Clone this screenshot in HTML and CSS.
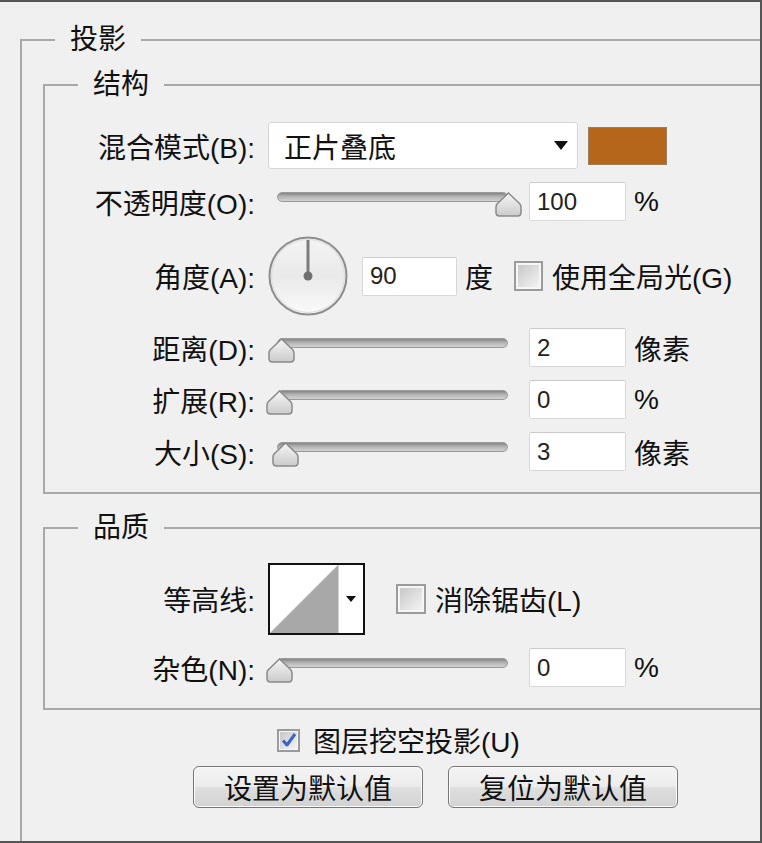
FILE: index.html
```html
<!DOCTYPE html>
<html lang="zh-CN">
<head>
  <meta charset="UTF-8">
  <title>投影</title>
  <link rel="stylesheet" href="styles.css">
</head>
<body>
  <div class="dialog">
    <fieldset class="group shadow">
      <legend>投影</legend>

      <!-- 结构 -->
      <fieldset class="group sub structure">
        <legend>结构</legend>
        <div class="rows">
          <div class="row row-blend">
            <span class="label">混合模式(B):</span>
            <div class="select">
              <span class="select-text">正片叠底</span>
              <span class="caret"></span>
            </div>
            <span class="swatch"></span>
          </div>

          <div class="row">
            <span class="label">不透明度(O):</span>
            <div class="slider">
              <span class="track"></span>
              <svg class="thumb" style="left: 227px" width="27" height="25" viewBox="0 0 27 25"><use href="#thumb"/></svg>
            </div>
            <span class="field">100</span>
            <span class="unit">%</span>
          </div>

          <div class="row row-angle">
            <span class="label">角度(A):</span>
            <svg class="dial" width="80" height="80" viewBox="0 0 80 80">
              <defs>
                <linearGradient id="dialFill" x1="0" y1="0" x2="0" y2="1">
                  <stop offset="0" stop-color="#f4f4f4"/>
                  <stop offset="0.5" stop-color="#e9e9e9"/>
                  <stop offset="1" stop-color="#fafafa"/>
                </linearGradient>
              </defs>
              <circle cx="40" cy="40" r="38.5" fill="url(#dialFill)" stroke="#8d8d8d" stroke-width="2"/>
              <circle cx="40" cy="40" r="36.5" fill="none" stroke="#dcdcdc" stroke-width="1"/>
              <line x1="40" y1="4" x2="40" y2="39" stroke="#7c7c7c" stroke-width="3"/>
              <circle cx="40" cy="40" r="4.5" fill="#6f6f6f"/>
            </svg>
            <span class="field field-angle">90</span>
            <span class="unit">度</span>
            <span class="check check-gap"></span>
            <span class="check-text">使用全局光(G)</span>
          </div>

          <div class="row">
            <span class="label">距离(D):</span>
            <div class="slider">
              <span class="track"></span>
              <svg class="thumb" style="left: 0px" width="27" height="25" viewBox="0 0 27 25"><use href="#thumb"/></svg>
            </div>
            <span class="field">2</span>
            <span class="unit">像素</span>
          </div>

          <div class="row">
            <span class="label">扩展(R):</span>
            <div class="slider">
              <span class="track"></span>
              <svg class="thumb" style="left: -2px" width="27" height="25" viewBox="0 0 27 25"><use href="#thumb"/></svg>
            </div>
            <span class="field">0</span>
            <span class="unit">%</span>
          </div>

          <div class="row">
            <span class="label">大小(S):</span>
            <div class="slider">
              <span class="track"></span>
              <svg class="thumb" style="left: 4px" width="27" height="25" viewBox="0 0 27 25"><use href="#thumb"/></svg>
            </div>
            <span class="field">3</span>
            <span class="unit">像素</span>
          </div>
        </div>
      </fieldset>

      <!-- 品质 -->
      <fieldset class="group sub quality">
        <legend>品质</legend>
        <div class="rows">
          <div class="row row-contour">
            <span class="label">等高线:</span>
            <div class="contour">
              <svg class="contour-preview" width="68" height="68" viewBox="0 0 68 68">
                <polygon points="0,68 68,0 68,68" fill="#a8a8a8"/>
              </svg>
              <span class="contour-arrow"><span class="caret caret-small"></span></span>
            </div>
            <span class="check check-aa"></span>
            <span class="check-text">消除锯齿(L)</span>
          </div>

          <div class="row">
            <span class="label">杂色(N):</span>
            <div class="slider">
              <span class="track"></span>
              <svg class="thumb" style="left: -2px" width="27" height="25" viewBox="0 0 27 25"><use href="#thumb"/></svg>
            </div>
            <span class="field">0</span>
            <span class="unit">%</span>
          </div>
        </div>
      </fieldset>

      <div class="knockout">
        <span class="check check-small checked">
          <svg width="18" height="18" viewBox="0 0 18 18"><path d="M3 9.5 L7 14 L15 3" fill="none" stroke="#3b63c4" stroke-width="3" stroke-linejoin="round"/></svg>
        </span>
        <span class="check-text">图层挖空投影(U)</span>
      </div>

      <div class="buttons">
        <button type="button" class="btn">设置为默认值</button>
        <button type="button" class="btn">复位为默认值</button>
      </div>
    </fieldset>
  </div>

  <!-- 滑块的小三角 -->
  <svg width="0" height="0" class="defs">
    <defs>
      <linearGradient id="thumbFill" x1="0" y1="0" x2="0" y2="1">
        <stop offset="0" stop-color="#f6f6f6"/>
        <stop offset="1" stop-color="#cbcbcb"/>
      </linearGradient>
      <path id="thumb" d="M13.5 1 L24.5 11.5 Q26 13 26 15 L26 20.5 Q26 24 22.5 24 L4.5 24 Q1 24 1 20.5 L1 15 Q1 13 2.5 11.5 Z" fill="url(#thumbFill)" stroke="#8a8a8a" stroke-width="1.5"/>
    </defs>
  </svg>
</body>
</html>
```

FILE: styles.css
```css
* {
  box-sizing: border-box;
}

body {
  margin: 0;
  background-color: #f0f0f0;
  font-family: "Liberation Sans", "Noto Sans CJK SC", sans-serif;
  font-size: 28px;
  color: #111;
}

.defs {
  position: absolute;
}

/* Marco del diálogo */
.dialog {
  height: 843px;
  display: flex;
  flex-direction: column;
  border-top: 2px solid #555;
  border-right: 2px solid #555;
  border-bottom: 2px solid #555;
}

/* Grupos */
.group {
  margin: 0;
  padding: 0;
  min-width: 0;
  border: 2px solid #a9a9a9;
  border-right: none;
}

.group legend {
  margin-left: 33px;
  padding: 0 15px;
  line-height: 28px;
}

.shadow {
  flex: 1;
  margin: 24px 0 0 20px;
  border-bottom: none;
}

.sub {
  margin-left: 21px;
}

.structure {
  margin-top: 17px;
  padding: 23px 0 21px;
}

.quality {
  margin-top: 20px;
  padding: 21px 0 21px;
}

.rows {
  display: flex;
  flex-direction: column;
  gap: 13px;
}

.row {
  display: flex;
  align-items: center;
  height: 39px;
}

.label {
  width: 210px;
  margin-right: 13px;
  flex-shrink: 0;
  text-align: right;
  white-space: nowrap;
}

/* Modo de fusión */
.row-blend {
  height: 47px;
}

.select {
  width: 310px;
  height: 47px;
  display: flex;
  align-items: center;
  padding: 0 9px 0 15px;
  background-color: #fff;
  border: 1px solid #d6d6d6;
  border-radius: 3px;
}

.select-text {
  flex: 1;
}

.caret {
  width: 0;
  height: 0;
  border-left: 7px solid transparent;
  border-right: 7px solid transparent;
  border-top: 9px solid #111;
}

.swatch {
  width: 79px;
  height: 38px;
  margin-left: 10px;
  background-color: #b5661b;
  border: 1px solid #98805e;
}

/* Deslizadores */
.slider {
  position: relative;
  width: 253px;
  height: 25px;
  margin-top: 6px;
  flex-shrink: 0;
}

.track {
  display: block;
  width: 231px;
  height: 10px;
  margin-left: 9px;
  border: 1px solid #9a9a9a;
  border-radius: 5px;
  background: linear-gradient(#848484, #b4b4b4 45%, #d2d2d2);
}

.thumb {
  position: absolute;
  top: 0;
}

.field {
  width: 97px;
  height: 39px;
  margin-left: 8px;
  padding-left: 7px;
  display: flex;
  align-items: center;
  flex-shrink: 0;
  background-color: #fff;
  border: 1px solid #d8d8d8;
  border-top-color: #c9c9c9;
  border-radius: 2px;
  font-size: 24px;
  color: #222;
}

.unit {
  margin-left: 8px;
}

/* Ángulo */
.row-angle {
  height: 80px;
  margin-top: 2px;
  margin-bottom: -1px;
}

.field-angle {
  width: 95px;
  margin-left: 14px;
}

.check {
  width: 29px;
  height: 30px;
  flex-shrink: 0;
  display: flex;
  align-items: center;
  justify-content: center;
  border: 2px solid #9b9b9b;
  box-shadow: inset 0 0 0 2px #f6f6f6;
  background: linear-gradient(135deg, #c4c4c4, #f7f7f7);
}

.check-gap {
  margin-left: 21px;
}

.check-text {
  margin-left: 9px;
  white-space: nowrap;
}

/* Contorno */
.row-contour {
  height: 72px;
}

.contour {
  width: 97px;
  height: 72px;
  display: flex;
  background-color: #fff;
  border: 2px solid #111;
}

.contour-arrow {
  flex: 1;
  display: flex;
  align-items: center;
  justify-content: center;
  border-left: 1px solid #cfcfcf;
}

.caret-small {
  border-left-width: 5px;
  border-right-width: 5px;
  border-top-width: 6px;
}

.check-aa {
  width: 30px;
  margin-left: 31px;
}

/* Capa */
.knockout {
  display: flex;
  align-items: center;
  height: 28px;
  margin: 16px 0 0 255px;
}

.check-small {
  width: 23px;
  height: 23px;
  box-shadow: inset 0 0 0 1px #f6f6f6;
}

.knockout .check-text {
  margin-left: 13px;
}

/* Botones */
.buttons {
  display: flex;
  gap: 25px;
  margin: 12px 0 0 171px;
}

.btn {
  width: 230px;
  height: 42px;
  padding: 0;
  font: inherit;
  color: #111;
  border: 1px solid #767676;
  border-radius: 6px;
  box-shadow: inset 0 0 0 1px #fbfbfb;
  background: linear-gradient(#f4f4f4, #ececec 48%, #dedede 52%, #d2d2d2);
}
```
